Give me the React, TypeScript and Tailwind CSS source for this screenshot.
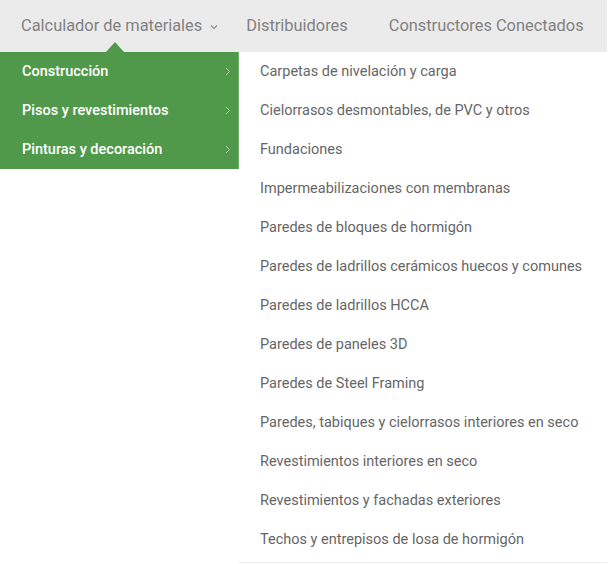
import React from "react";

const subItems = [
  "Carpetas de nivelación y carga",
  "Cielorrasos desmontables, de PVC y otros",
  "Fundaciones",
  "Impermeabilizaciones con membranas",
  "Paredes de bloques de hormigón",
  "Paredes de ladrillos cerámicos huecos y comunes",
  "Paredes de ladrillos HCCA",
  "Paredes de paneles 3D",
  "Paredes de Steel Framing",
  "Paredes, tabiques y cielorrasos interiores en seco",
  "Revestimientos interiores en seco",
  "Revestimientos y fachadas exteriores",
  "Techos y entrepisos de losa de hormigón",
];

const cats = ["Construcción", "Pisos y revestimientos", "Pinturas y decoración"];

export default function App() {
  return (
    <div className="w-[608px] h-[564px] bg-white overflow-hidden" style={{ fontFamily: "Roboto, 'Liberation Sans', sans-serif" }}>
      <div className="relative w-[607px] h-[52px] bg-[#ebebeb] flex items-center text-[16.4px] text-[#828282]">
        <div className="ml-[21px] flex items-center">
          <span>Calculador de materiales</span>
          <svg className="ml-[8px] mt-[2px]" width="8" height="6" viewBox="0 0 8 6" fill="none">
            <path d="M1 1.5 L4 4.5 L7 1.5" stroke="#8a8a8a" strokeWidth="1.1" />
          </svg>
        </div>
        <span className="ml-[28px]">Distribuidores</span>
        <span className="ml-[41px]">Constructores Conectados</span>
        <div className="absolute left-[106px] bottom-0 w-0 h-0 border-l-[9px] border-r-[9px] border-b-[10px] border-l-transparent border-r-transparent border-b-[#51994a]" />
      </div>
      <div className="flex items-start">
        <div className="w-[239px] bg-[#51994a] border-r border-[#6fae68]">
          {cats.map((c) => (
            <div key={c} className="h-[39px] flex items-center justify-between pl-[22px] pr-[7px] text-[14.5px] font-medium text-white">
              <span>{c}</span>
              <svg width="6" height="9" viewBox="0 0 6 9" fill="none">
                <path d="M1 1 L4.5 4.5 L1 8" stroke="#a9d4a4" strokeWidth="1" />
              </svg>
            </div>
          ))}
        </div>
        <div className="w-[368px] bg-white border-b border-[#ededed] pb-[3px]">
          {subItems.map((s) => (
            <div key={s} className="h-[39px] flex items-center pl-[21px] text-[14.5px] text-[#666666]">
              {s}
            </div>
          ))}
        </div>
      </div>
    </div>
  );
}
